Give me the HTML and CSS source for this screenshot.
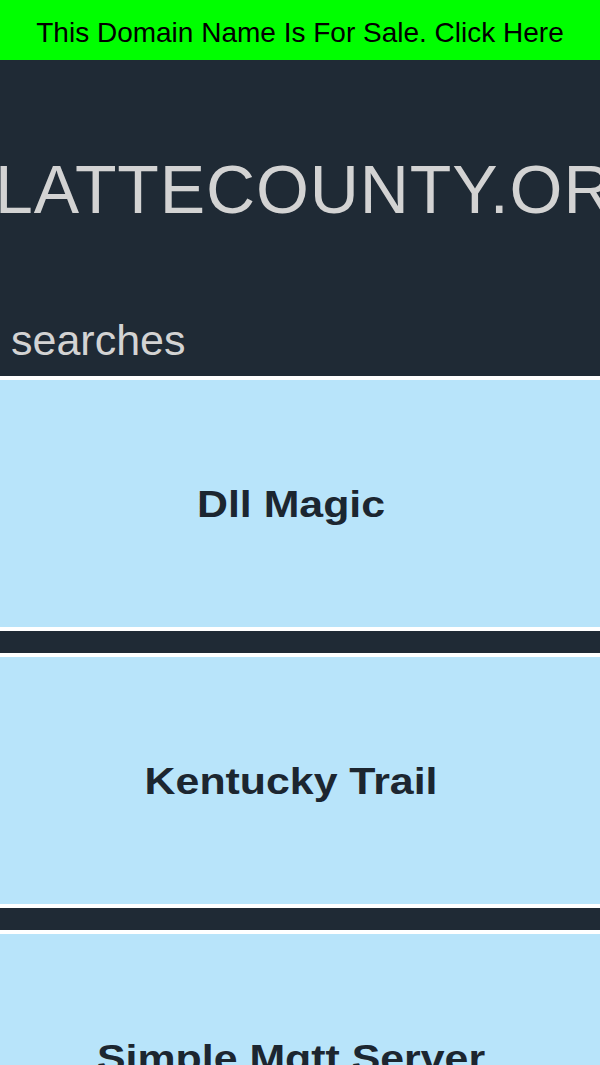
FILE: index.html
```html
<!DOCTYPE html>
<html lang="en">
<head>
<meta charset="utf-8">
<title>LATTECOUNTY.ORG</title>
<link rel="stylesheet" href="styles.css">
</head>
<body>
  <div class="banner"><a class="banner-link" href="#">This Domain Name Is For Sale. Click Here</a></div>
  <header class="hero">
    <h1 class="site-title">LATTECOUNTY.ORG</h1>
    <h2 class="section-label">searches</h2>
  </header>
  <main class="cards">
    <a class="card" href="#"><span class="card-text">Dll Magic</span></a>
    <a class="card" href="#"><span class="card-text">Kentucky Trail</span></a>
    <a class="card" href="#"><span class="card-text">Simple Mqtt Server</span></a>
  </main>
</body>
</html>
```

FILE: styles.css
```css
* { box-sizing: border-box; }

html, body {
  margin: 0;
  padding: 0;
}

body {
  background: #1f2a35;
  font-family: "Liberation Sans", Arial, sans-serif;
  overflow-x: hidden;
}

.banner {
  height: 60px;
  background: #00ff00;
  padding-top: 8px;
  text-align: center;
}

.banner-link {
  color: #000;
  text-decoration: none;
  font-size: 28px;
  line-height: 50px;
  white-space: nowrap;
}

.hero {
  height: 316px;
  background: #1f2a35;
  padding-top: 95px;
  overflow: hidden;
}

.site-title {
  margin: 0;
  font-weight: normal;
  font-size: 68px;
  line-height: 68px;
  letter-spacing: 0.9px;
  color: #d3d3d3;
  white-space: nowrap;
  text-indent: -5px;
}

.section-label {
  margin: 96px 0 0;
  padding-left: 11px;
  font-weight: normal;
  font-size: 43px;
  line-height: 42px;
  color: #d3d3d3;
}

.cards {
  display: flex;
  flex-direction: column;
  gap: 22px;
}

.card {
  display: flex;
  align-items: center;
  justify-content: center;
  height: 255px;
  flex-shrink: 0;
  padding-right: 18px;
  padding-top: 3px;
  border: 4px solid #ffffff;
  border-left: 0;
  border-right: 0;
  background: #b8e4fa;
  color: #1c2630;
  text-decoration: none;
}

.card-text {
  display: inline-block;
  font-weight: bold;
  font-size: 36px;
  line-height: 40px;
  transform: scaleX(1.19);
  white-space: nowrap;
}
```
